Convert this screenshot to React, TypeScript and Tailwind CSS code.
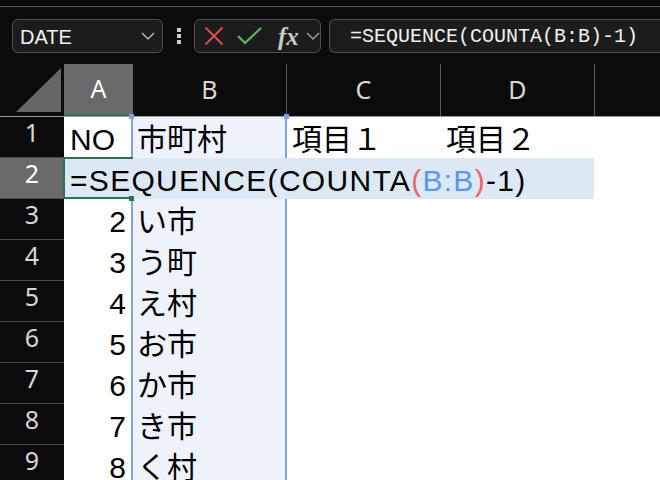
const cellFont = "[font-family:'Liberation_Sans','Noto_Sans_CJK_JP',sans-serif]";
const headFont = "[font-family:'Noto_Sans','Liberation_Sans',sans-serif]";

const data = [
  { no: "2", name: "い市" },
  { no: "3", name: "う町" },
  { no: "4", name: "え村" },
  { no: "5", name: "お市" },
  { no: "6", name: "か市" },
  { no: "7", name: "き市" },
  { no: "8", name: "く村" },
];

function Chevron({ className }: { className?: string }) {
  return (
    <svg width="14" height="9" viewBox="0 0 14 9" className={className}>
      <polyline points="1,1 7,7 13,1" fill="none" stroke="currentColor" strokeWidth="1.5" />
    </svg>
  );
}

function RowHead({ n, active }: { n: number; active?: boolean }) {
  return (
    <div
      className={`flex w-[64px] shrink-0 justify-center border-b border-[#4a4a4a] pt-[3px] text-[25px] leading-[25px] ${headFont} ${
        active ? "bg-[#6a6a6a] text-white" : "text-[#d6d6d6]"
      }`}
    >
      {n}
    </div>
  );
}

export default function App() {
  return (
    <div className="h-[480px] w-[660px] overflow-hidden bg-[#0b0b0b]">
      {/* ribbon strip + name box / formula bar */}
      <div className="h-[64px]">
        <div className="h-[6px]" />
        <div className="border-t border-[#555]" />
        <div className="mt-[12px] flex h-[34px]">
          <div className="ml-[12px] flex w-[151px] items-center justify-between rounded-[6px] border border-[#4e4e4e] bg-[#1c1c1c] pl-[7px] pr-[7px]">
            <span className="pt-[1px] text-[20px] text-[#f2f2f2] [font-family:'Liberation_Sans_Narrow','Liberation_Sans',sans-serif]">
              DATE
            </span>
            <Chevron className="text-[#b5b5b5]" />
          </div>
          <div className="flex w-[31px] flex-col items-center justify-center gap-[2px]">
            <span className="h-[4px] w-[4px] bg-[#cfcfcf]" />
            <span className="h-[4px] w-[4px] bg-[#cfcfcf]" />
            <span className="h-[4px] w-[4px] bg-[#cfcfcf]" />
          </div>
          <div className="flex w-[127px] items-center rounded-[6px] border border-[#4e4e4e] bg-[#1c1c1c] pl-[9px]">
            <svg width="20" height="20" viewBox="0 0 20 20">
              <path d="M1.5 1.5 L18.5 18.5 M18.5 1.5 L1.5 18.5" stroke="#e0494b" strokeWidth="2" />
            </svg>
            <svg width="25" height="18" viewBox="0 0 25 18" className="ml-[13px]">
              <polyline points="1,9 8,16 24,1" fill="none" stroke="#58b865" strokeWidth="2.2" />
            </svg>
            <span className="ml-[16px] text-[25px] font-bold italic leading-none text-[#cacaca] [font-family:'Liberation_Serif',serif]">
              fx
            </span>
            <Chevron className="ml-[7px] text-[#9a9a9a]" />
          </div>
          <div className="ml-[8px] flex flex-1 items-center rounded-l-[6px] border border-r-0 border-[#4e4e4e] bg-[#1c1c1c] pl-[20px] pt-[2px]">
            <span className="text-[20px] text-[#f0f0f0] [font-family:'Liberation_Mono',monospace]">
              =SEQUENCE(COUNTA(B:B)-1)
            </span>
          </div>
        </div>
      </div>

      {/* column headers */}
      <div className={`flex h-[53px] border-b border-[#9a9a9a] text-[25px] ${headFont}`}>
        <div className="w-[64px] shrink-0">
          <svg width="64" height="52" viewBox="0 0 64 52">
            <polygon points="16,48 61,48 61,4" fill="#666" />
          </svg>
        </div>
        <div className="flex w-[69px] shrink-0 items-center justify-center border-b-2 border-[#2a7350] bg-[#6a6a6a] text-white">
          A
        </div>
        {["B", "C", "D"].map((c) => (
          <div
            key={c}
            className="flex w-[154px] shrink-0 items-center justify-center border-r border-[#5a5a5a] text-[#d8d8d8]"
          >
            {c}
          </div>
        ))}
        <div className="flex-1" />
      </div>

      {/* sheet body */}
      <div className={`text-[30px] leading-[34px] text-black ${cellFont}`}>
        <div className="flex h-[41px]">
          <RowHead n={1} />
          <div className="flex flex-1 bg-white">
            <div className="flex w-[67px] items-end pb-[1px] pl-[6px]">NO</div>
            <div className="relative flex w-[156px] items-end border-x-2 border-[#7ba4e1] bg-[#eef3fb] pb-[1px] pl-[4px]">
              市町村
              <span className="absolute -left-[4px] -top-[3px] h-[5px] w-[5px] bg-[#7ba4e1]" />
              <span className="absolute -right-[4px] -top-[3px] h-[5px] w-[5px] bg-[#7ba4e1]" />
            </div>
            <div className="flex w-[154px] items-end pb-[1px] pl-[5px]">項目１</div>
            <div className="flex w-[154px] items-end pb-[1px] pl-[5px]">項目２</div>
          </div>
        </div>

        {/* row being edited */}
        <div className="flex h-[41px]">
          <RowHead n={2} active />
          <div className="relative flex flex-1 bg-white">
            <div className="flex w-[530px] items-end bg-[#dce8f4] pb-[1px] pl-[6px] tracking-[1.3px]">
              =SEQUENCE(COUNTA<span className="text-[#e8666a]">(</span>
              <span className="text-[#5b98ec]">B:B</span>
              <span className="text-[#e8666a]">)</span>-1)
            </div>
            <div className="absolute -left-[1px] -top-[1px] h-[42px] w-[70px] border-2 border-r-0 border-[#2a7350]" />
            <span className="absolute left-[65px] top-[38px] h-[5px] w-[5px] bg-[#2a7350]" />
          </div>
        </div>

        {data.map((r, i) => (
          <div key={r.no} className="flex h-[41px]">
            <RowHead n={i + 3} />
            <div className="flex flex-1 bg-white">
              <div className="flex w-[67px] items-end justify-end pb-[1px] pr-[5px]">{r.no}</div>
              <div className="flex w-[156px] items-end border-x-2 border-[#7ba4e1] bg-[#eef3fb] pb-[1px] pl-[4px]">
                {r.name}
              </div>
            </div>
          </div>
        ))}
      </div>
    </div>
  );
}
